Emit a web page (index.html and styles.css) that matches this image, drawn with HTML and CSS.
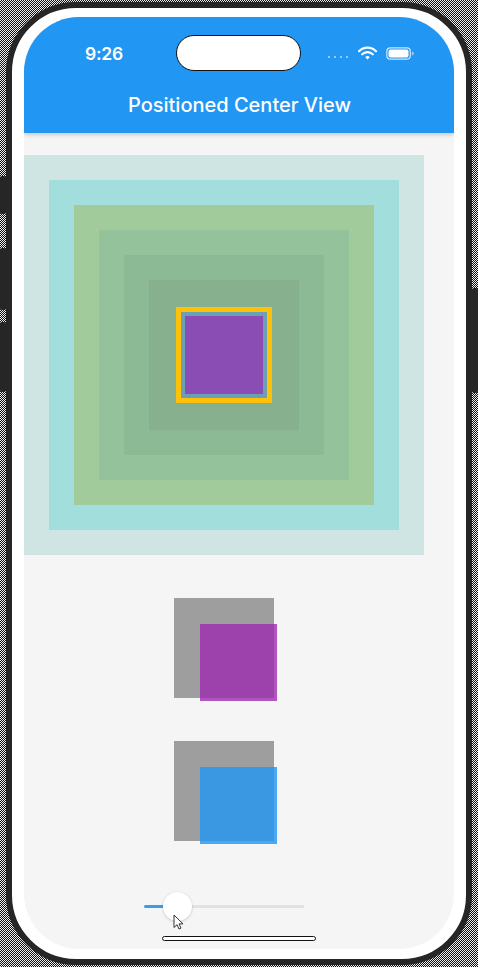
FILE: index.html
```html
<!DOCTYPE html>
<html>
<head>
<meta charset="utf-8">
<link rel="stylesheet" href="styles.css">
</head>
<body>
<div class="phone">
  <span class="btn btn-l1"></span>
  <span class="btn btn-l2"></span>
  <span class="btn btn-l3"></span>
  <span class="btn btn-r1"></span>
  <div class="bezel">
    <div class="screen">
      <header class="appbar">
        <div class="status">
          <span class="time">9:26</span>
          <span class="island"></span>
          <span class="icons">
            <svg class="signal" width="22" height="6" viewBox="0 0 22 6"><g fill="#9cc8f5"><rect x="0" y="3" width="2" height="2"/><rect x="6" y="3" width="2" height="2"/><rect x="12" y="3" width="2" height="2"/><rect x="18" y="3" width="2" height="2"/></g></svg>
            <svg class="wifi" width="19" height="14" viewBox="0 0 19 14"><path d="M1 5.2a12 12 0 0 1 17 0" fill="none" stroke="#fff" stroke-width="2.2" stroke-linecap="round"/><path d="M4.2 8.3a7.5 7.5 0 0 1 10.6 0" fill="none" stroke="#fff" stroke-width="2.2" stroke-linecap="round"/><path d="M7.3 11.3a3 3 0 0 1 4.4 0L9.5 13.6z" fill="#fff"/></svg>
            <svg class="battery" width="28" height="13" viewBox="0 0 28 13"><rect x="0.8" y="0.8" width="23.5" height="11.4" rx="3.5" fill="none" stroke="#cfe6fb" stroke-width="1.2"/><rect x="2.5" y="2.5" width="20" height="8" rx="2" fill="#fff"/><path d="M25.8 4.5v4a2 2 0 0 0 0-4z" fill="#9cc8f5"/></svg>
          </span>
        </div>
        <div class="title">Positioned Center View</div>
      </header>
      <main class="content">
        <div class="sq l1">
          <div class="sq l2">
            <div class="sq l3">
              <div class="sq l4">
                <div class="sq l5">
                  <div class="sq l6">
                    <div class="target"><div class="target-inner"></div></div>
                  </div>
                </div>
              </div>
            </div>
          </div>
        </div>
        <div class="stack stack-1"><div class="overlay purple"></div></div>
        <div class="stack stack-2"><div class="overlay blue"></div></div>
        <div class="slider">
          <div class="track-active"></div>
          <div class="thumb"></div>
          <div class="track-rest"></div>
          <svg class="cursor" width="11" height="16" viewBox="0 0 11 16"><path d="M1 1v12.5l3-2.8 2 4.3 2-.9-2-4.2h4z" fill="#fff" stroke="#333" stroke-width="1"/></svg>
        </div>
      </main>
      <div class="home"></div>
    </div>
  </div>
</div>
</body>
</html>
```
FILE: styles.css
```css
html, body {
  margin: 0;
  padding: 0;
}
body {
  width: 478px;
  height: 967px;
  overflow: hidden;
  background: repeating-conic-gradient(#111 0 25%, #eee 0 50%) 0 0 / 2px 2px;
  font-family: Inter, "Noto Sans", sans-serif;
}
.phone {
  position: relative;
  margin: 2px 6px;
  width: 466px;
  height: 963px;
  box-sizing: border-box;
  border: 6px solid #262626;
  border-radius: 70px;
  background: #fff;
}
.btn {
  position: absolute;
  width: 6px;
  background: #262626;
  border-radius: 2px;
}
.btn-l1 { left: -12px; top: 168px; height: 38px; }
.btn-l2 { left: -12px; top: 240px; height: 62px; }
.btn-l3 { left: -12px; top: 314px; height: 70px; }
.btn-r1 { right: -12px; top: 280px; height: 105px; }
.bezel {
  padding: 9px 12px 10px;
  height: 100%;
  box-sizing: border-box;
}
.screen {
  position: relative;
  height: 932px;
  border-radius: 55px;
  overflow: hidden;
  background: #f5f5f5;
  display: flex;
  flex-direction: column;
}
.appbar {
  background: #2196f3;
  height: 116px;
  display: flex;
  flex-direction: column;
  box-shadow: 0 2px 4px rgba(0,0,0,0.18);
  position: relative;
  z-index: 1;
}
.status {
  height: 48px;
  padding: 12px 0 0 0;
  display: flex;
  align-items: center;
  color: #fff;
}
.time {
  margin-left: 61px;
  width: 40px;
  font-size: 17.5px;
  font-weight: 600;
  letter-spacing: -0.2px;
}
.island {
  margin-left: 51px;
  width: 123px;
  height: 34px;
  border: 1px solid #111;
  border-radius: 18px;
  background: #fff;
}
.icons {
  margin-left: auto;
  margin-right: 40px;
  display: flex;
  align-items: center;
  gap: 8px;
}
.signal { margin-top: 6px; }
.battery { margin-left: 1px; }
.title {
  height: 56px;
  display: flex;
  align-items: center;
  justify-content: center;
  color: #fff;
  font-size: 20px;
  font-weight: 500;
  padding-left: 1px;
}
.content {
  width: 400px;
  padding-top: 22px;
  display: flex;
  flex-direction: column;
  align-items: center;
}
.sq {
  box-sizing: border-box;
  display: flex;
  align-items: center;
  justify-content: center;
}
.l1 { width: 400px; height: 400px; background: #cfe5e4; }
.l2 { width: 350px; height: 350px; background: #a2dedb; }
.l3 { width: 300px; height: 300px; background: #a1cb9b; }
.l4 { width: 250px; height: 250px; background: #94c39b; }
.l5 { width: 200px; height: 200px; background: #8cba95; }
.l6 { width: 150px; height: 150px; background: #87b08e; }
.target {
  width: 96px;
  height: 96px;
  box-sizing: border-box;
  border: 5px solid #ffc107;
  background: #6b9fb6;
  padding: 4px;
}
.target-inner {
  width: 78px;
  height: 78px;
  background: #8a4db4;
}
.stack {
  position: relative;
  width: 100px;
  height: 100px;
  background: #9e9e9e;
}
.stack-1 { margin-top: 43px; }
.stack-2 { margin-top: 43px; }
.overlay {
  position: absolute;
  left: 26px;
  top: 26px;
  width: 77px;
  height: 77px;
}
.purple { background: rgba(156, 39, 176, 0.78); }
.blue { background: rgba(33, 150, 243, 0.8); }
.slider {
  position: relative;
  margin-top: 51px;
  width: 160px;
  height: 29px;
  display: flex;
  align-items: center;
}
.track-active {
  width: 19px;
  height: 3px;
  background: #3d9be9;
  border-radius: 2px 0 0 2px;
}
.thumb {
  width: 29px;
  height: 29px;
  border-radius: 50%;
  background: #fff;
  box-shadow: 0 1px 3px rgba(0,0,0,0.15), 0 0 2px rgba(0,0,0,0.08);
  position: relative;
  z-index: 1;
}
.track-rest {
  flex: 1;
  height: 3px;
  background: #dfe2e6;
}
.cursor {
  position: absolute;
  left: 29px;
  top: 22px;
  z-index: 2;
}
.home {
  position: absolute;
  left: 138px;
  bottom: 8px;
  width: 154px;
  height: 5px;
  box-sizing: border-box;
  border: 1px solid #111;
  border-radius: 3px;
  background: #fff;
}
```
